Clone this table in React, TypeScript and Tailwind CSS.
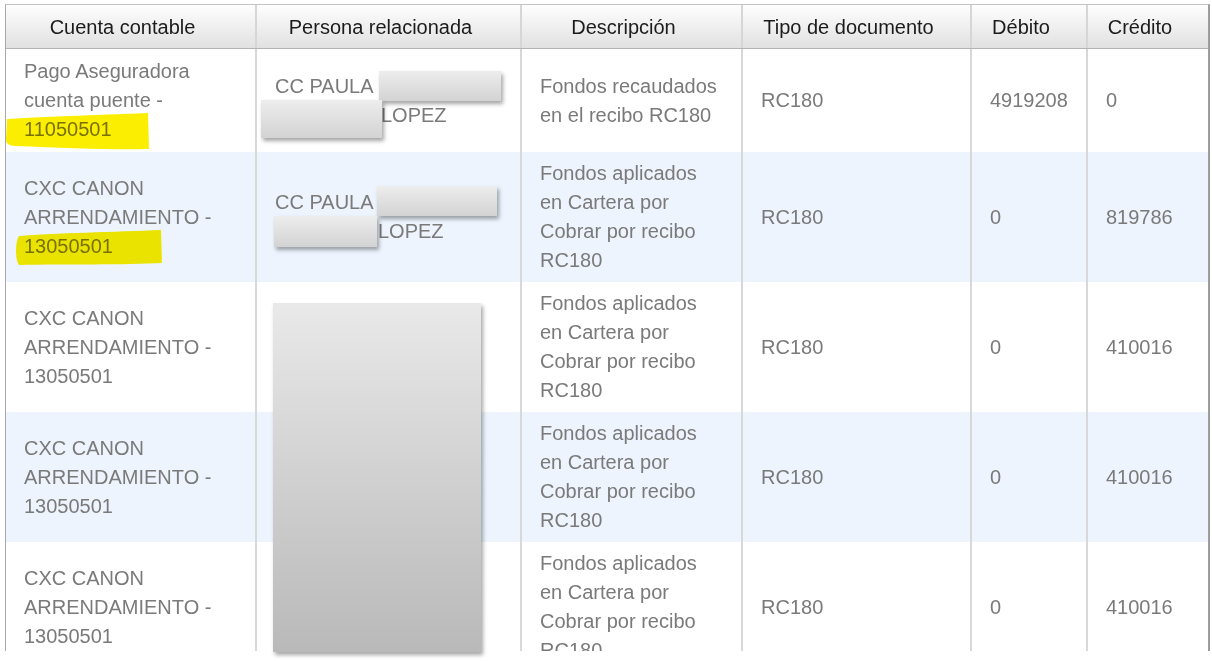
const headers = ["Cuenta contable", "Persona relacionada", "Descripción", "Tipo de documento", "Débito", "Crédito"];

type Row = {
  cuenta: string[];
  highlight?: "a" | "b";
  persona?: "r1" | "r2";
  desc: string[];
  tipo: string;
  debito: string;
  credito: string;
  h?: string;
};

const aplicados = ["Fondos aplicados", "en Cartera por", "Cobrar por recibo", "RC180"];

const rows: Row[] = [
  {
    cuenta: ["Pago Aseguradora", "cuenta puente -", "11050501"],
    highlight: "a",
    persona: "r1",
    desc: ["Fondos recaudados", "en el recibo RC180"],
    tipo: "RC180",
    debito: "4919208",
    credito: "0",
    h: "h-[103px]",
  },
  {
    cuenta: ["CXC CANON", "ARRENDAMIENTO -", "13050501"],
    highlight: "b",
    persona: "r2",
    desc: aplicados,
    tipo: "RC180",
    debito: "0",
    credito: "819786",
  },
  { cuenta: ["CXC CANON", "ARRENDAMIENTO -", "13050501"], desc: aplicados, tipo: "RC180", debito: "0", credito: "410016" },
  { cuenta: ["CXC CANON", "ARRENDAMIENTO -", "13050501"], desc: aplicados, tipo: "RC180", debito: "0", credito: "410016" },
  { cuenta: ["CXC CANON", "ARRENDAMIENTO -", "13050501"], desc: aplicados, tipo: "RC180", debito: "0", credito: "410016" },
];

const cell = "relative flex items-center border-r-2 border-[#d8d8d8] pl-[18px] pr-2 py-[7px]";
const box = "absolute bg-linear-to-b from-[#ededed] to-[#d3d3d3] shadow-[2px_3px_4px_rgba(0,0,0,0.35)]";

function Lines({ lines }: { lines: string[] }) {
  return (
    <div className="whitespace-nowrap">
      {lines.map((l, i) => (
        <div key={i}>{l}</div>
      ))}
    </div>
  );
}

function Highlight({ kind }: { kind: "a" | "b" }) {
  if (kind === "a") {
    return (
      <svg className="absolute left-[-1px] top-[64px] mix-blend-multiply" width="146" height="38" viewBox="0 0 146 38">
        <path d="M2 6 C 30 4, 90 2, 143 0 L 144 36 C 110 37, 60 35, 10 33 C 4 33, 0 30, 1 26 Z" fill="#fcee00" />
      </svg>
    );
  }
  return (
    <svg className="absolute left-[9px] top-[78px] mix-blend-multiply" width="148" height="36" viewBox="0 0 148 36">
      <path d="M4 6 C 40 3, 100 2, 146 0 L 147 33 C 110 35, 50 34, 4 35 C 0 30, 0 12, 4 6 Z" fill="#fcee00" />
    </svg>
  );
}

function Persona({ kind }: { kind?: "r1" | "r2" }) {
  if (!kind) return null;
  const r1 = kind === "r1";
  return (
    <>
      <div className="whitespace-nowrap">
        <div>CC PAULA</div>
        <div className={r1 ? "pl-[106px]" : "pl-[103px]"}>LOPEZ</div>
      </div>
      {r1 ? (
        <>
          <div className={`${box} left-[122px] top-[22px] h-[30px] w-[122px]`} />
          <div className={`${box} left-[4px] top-[51px] h-[38px] w-[121px]`} />
        </>
      ) : (
        <>
          <div className={`${box} left-[120px] top-[34px] h-[30px] w-[120px]`} />
          <div className={`${box} left-[17px] top-[64px] h-[31px] w-[103px]`} />
        </>
      )}
    </>
  );
}

export default function App() {
  return (
    <div className="relative h-[661px] w-[1212px] overflow-hidden bg-white pl-[5px] pt-[4px] font-['Liberation_Sans',Arial,sans-serif] text-[20px]">
      <div className="h-[647px] w-[1205px] overflow-hidden border-l border-t border-r-2 border-l-[#a9a9a9] border-t-[#c4c4c4] border-r-[#9c9c9c]">
        {/* header */}
        <div className="grid h-[44px] grid-cols-[251px_265px_221px_229px_116px_120px] border-b border-[#b3b3b3] bg-linear-to-b from-[#fefefe] to-[#e1e1e1]">
          {headers.map((h, i) => (
            <div
              key={h}
              className={`flex items-center justify-center pl-2 pr-6 leading-none text-[#1b1b1b] ${i < 5 ? "border-r-2 border-[#d6d6d6]" : ""}`}
            >
              {h}
            </div>
          ))}
        </div>

        {rows.map((r, i) => (
          <div
            key={i}
            className={`grid grid-cols-[251px_265px_221px_229px_116px_120px] leading-[29px] text-[#7a7a7a] ${r.h ?? ""} ${i % 2 === 1 ? "bg-[#edf4fd]" : "bg-white"}`}
          >
            <div className={cell}>
              <Lines lines={r.cuenta} />
              {r.highlight && <Highlight kind={r.highlight} />}
            </div>
            <div className={cell}>
              <Persona kind={r.persona} />
            </div>
            <div className={cell}>
              <Lines lines={r.desc} />
            </div>
            <div className={cell}>{r.tipo}</div>
            <div className={`${cell} pl-[16px]`}>{r.debito}</div>
            <div className="flex items-center py-[7px] pl-[18px]">{r.credito}</div>
          </div>
        ))}
      </div>

      {/* redacted block over the persona column */}
      <div className="absolute left-[273px] top-[303px] h-[349px] w-[208px] bg-linear-to-b from-[#e9e9e9] to-[#b9b9b9] shadow-[2px_3px_4px_rgba(0,0,0,0.35)]" />
    </div>
  );
}
